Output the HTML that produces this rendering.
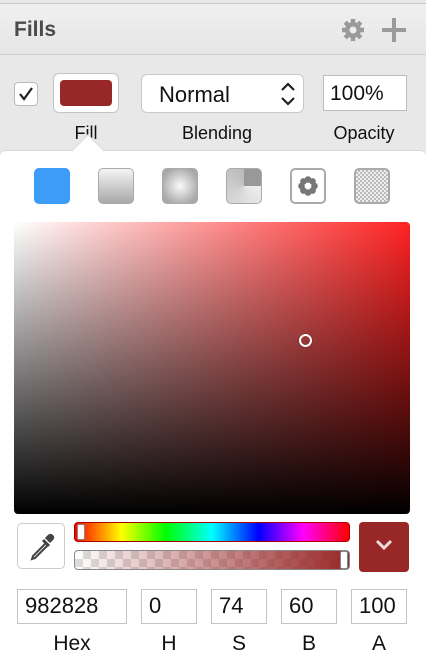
<!DOCTYPE html><html><head><style>
*{margin:0;padding:0;box-sizing:border-box}
body{width:426px;height:658px;overflow:hidden;background:#e8e8e8;font-family:"Liberation Sans",Arial,sans-serif;position:relative;color:#111}
.a{position:absolute}
.hdr{left:0;top:3px;width:426px;height:52px;background:linear-gradient(#f0f0f0,#e6e6e6);border-top:1px solid #c8c8c8;border-bottom:1px solid #cfcfcf}
.lbl{font-size:18px;color:#111;text-align:center}
.inp{background:#fff;border:1px solid #c4c4c4;font-size:22px;padding:3px 0 0 7px;height:35px}
.ic{width:36px;height:36px;border-radius:5px;top:168px}
.bl{top:632px;text-align:center;font-size:21px}
</style></head><body>
<div class="a hdr"></div>
<div class="a" style="left:14px;top:18px;font-size:21px;font-weight:bold;color:#4a4a4a">Fills</div>
<svg class="a" style="left:340px;top:17px" width="26" height="26" viewBox="0 0 26 26"><g fill="#9a9a9a"><circle cx="13" cy="13" r="8"/><g stroke="#9a9a9a" stroke-width="4.5"><line x1="13" y1="2" x2="13" y2="24"/><line x1="2" y1="13" x2="24" y2="13"/><line x1="5.2" y1="5.2" x2="20.8" y2="20.8"/><line x1="20.8" y1="5.2" x2="5.2" y2="20.8"/></g></g><circle cx="13" cy="13" r="3.5" fill="#ececec"/></svg>
<svg class="a" style="left:381px;top:17px" width="26" height="26"><path d="M13 1v24M1 13h24" stroke="#9a9a9a" stroke-width="4"/></svg>
<div class="a" style="left:14px;top:82px;width:24px;height:24px;background:#fff;border:1px solid #bbb;border-radius:4px"></div>
<svg class="a" style="left:17px;top:86px" width="18" height="16"><path d="M3 8l4 5 8-11" fill="none" stroke="#222" stroke-width="2.2"/></svg>
<div class="a" style="left:53px;top:73px;width:66px;height:40px;background:#fff;border:1px solid #c4c4c4;border-radius:6px"></div>
<div class="a" style="left:60px;top:80px;width:52px;height:26px;background:#982828;border-radius:4px"></div>
<div class="a" style="left:141px;top:74px;width:163px;height:39px;background:#fff;border:1px solid #c8c8c8;border-radius:6px;font-size:22px;padding:7px 0 0 17px">Normal</div>
<svg class="a" style="left:279px;top:81px" width="18" height="26"><path d="M3 9l6-6 6 6M3 17l6 6 6-6" fill="none" stroke="#222" stroke-width="2.2"/></svg>
<div class="a" style="left:323px;top:75px;width:84px;height:36px;background:#fff;border:1px solid #bbb;font-size:21px;padding:6px 0 0 6px">100%</div>
<div class="a lbl" style="left:60px;top:123px;width:52px">Fill</div>
<div class="a lbl" style="left:157px;top:123px;width:120px">Blending</div>
<div class="a lbl" style="left:319px;top:123px;width:90px">Opacity</div>
<div class="a" style="left:0;top:150px;width:426px;height:508px;background:#fff;border-radius:6px 6px 0 0;border-top:1px solid #d8d8d8"></div>
<div class="a" style="left:76px;top:139px;width:24px;height:24px;background:#fff;transform:rotate(45deg);border-left:1px solid #d8d8d8;border-top:1px solid #d8d8d8"></div>
<div class="a ic" style="left:34px;background:#3d9cf7"></div>
<div class="a ic" style="left:98px;background:linear-gradient(#f4f4f4,#a8a8a8);border:1px solid #aaa"></div>
<div class="a ic" style="left:162px;background:radial-gradient(circle,#fafafa,#a8a8a8 80%);border:1px solid #aaa"></div>
<div class="a ic" style="left:226px;background:conic-gradient(#999 0 25%,#eee 25%,#bbb 100%);border:1px solid #aaa"></div>
<div class="a ic" style="left:290px;background:#fff;border:2px solid #aaa"></div>
<svg class="a" style="left:295px;top:173px" width="26" height="26" viewBox="0 0 26 26"><g fill="#777"><circle cx="13" cy="6.5" r="3.3"/><circle cx="13" cy="19.5" r="3.3"/><circle cx="6.5" cy="13" r="3.3"/><circle cx="19.5" cy="13" r="3.3"/><circle cx="8.4" cy="8.4" r="3.3"/><circle cx="17.6" cy="8.4" r="3.3"/><circle cx="8.4" cy="17.6" r="3.3"/><circle cx="17.6" cy="17.6" r="3.3"/></g><circle cx="13" cy="13" r="2.5" fill="#fff"/></svg>
<div class="a ic" style="left:354px;border:2px solid #aaa;background:repeating-conic-gradient(#bbb 0 25%,#eee 0 50%) 0 0/4px 4px"></div>
<div class="a" style="left:14px;top:222px;width:396px;height:292px;border-radius:4px;background:linear-gradient(transparent,#000),linear-gradient(90deg,#fff,#f22)"></div>
<div class="a" style="left:299px;top:334px;width:13px;height:13px;border:2px solid #fff;border-radius:50%;box-shadow:0 0 1px #000"></div>
<div class="a" style="left:17px;top:523px;width:48px;height:46px;border:1px solid #ccc;border-radius:5px;background:#fff"></div>
<svg class="a" style="left:26px;top:531px" width="32" height="32"><path d="M20 12L7 25l-1 3 3-1 13-13" fill="none" stroke="#444" stroke-width="2"/><path d="M17 9l6 6M20 8l3-3c2-2 5 1 3 3l-3 3" fill="#444" stroke="#444" stroke-width="3"/></svg>
<div class="a" style="left:74px;top:522px;width:276px;height:20px;border-radius:4px;border:1px solid #a00;background:linear-gradient(90deg,#f00,#ff0 17%,#0f0 33%,#0ff 50%,#00f 67%,#f0f 83%,#f00)"></div>
<div class="a" style="left:77px;top:524px;width:8px;height:16px;background:#fff;border:1px solid #888;border-radius:2px"></div>
<div class="a" style="left:74px;top:550px;width:276px;height:20px;border-radius:4px;border:1px solid #888;background:linear-gradient(90deg,rgba(152,40,40,0),#982828),repeating-conic-gradient(#ddd 0 25%,#fff 0 50%) 0 0/16px 16px"></div>
<div class="a" style="left:340px;top:551px;width:8px;height:18px;background:#fff;border:1px solid #888;border-radius:2px"></div>
<div class="a" style="left:359px;top:522px;width:50px;height:50px;background:#982828;border-radius:4px"></div>
<svg class="a" style="left:374px;top:538px" width="20" height="14"><path d="M3 3l7 7 7-7" fill="none" stroke="#f2dada" stroke-width="3"/></svg>
<div class="a inp" style="left:17px;top:589px;width:110px">982828</div>
<div class="a inp" style="left:141px;top:589px;width:56px">0</div>
<div class="a inp" style="left:211px;top:589px;width:56px">74</div>
<div class="a inp" style="left:281px;top:589px;width:56px">60</div>
<div class="a inp" style="left:351px;top:589px;width:56px">100</div>
<div class="a bl" style="left:17px;width:110px">Hex</div>
<div class="a bl" style="left:141px;width:56px">H</div>
<div class="a bl" style="left:211px;width:56px">S</div>
<div class="a bl" style="left:281px;width:56px">B</div>
<div class="a bl" style="left:351px;width:56px">A</div>
</body></html>
